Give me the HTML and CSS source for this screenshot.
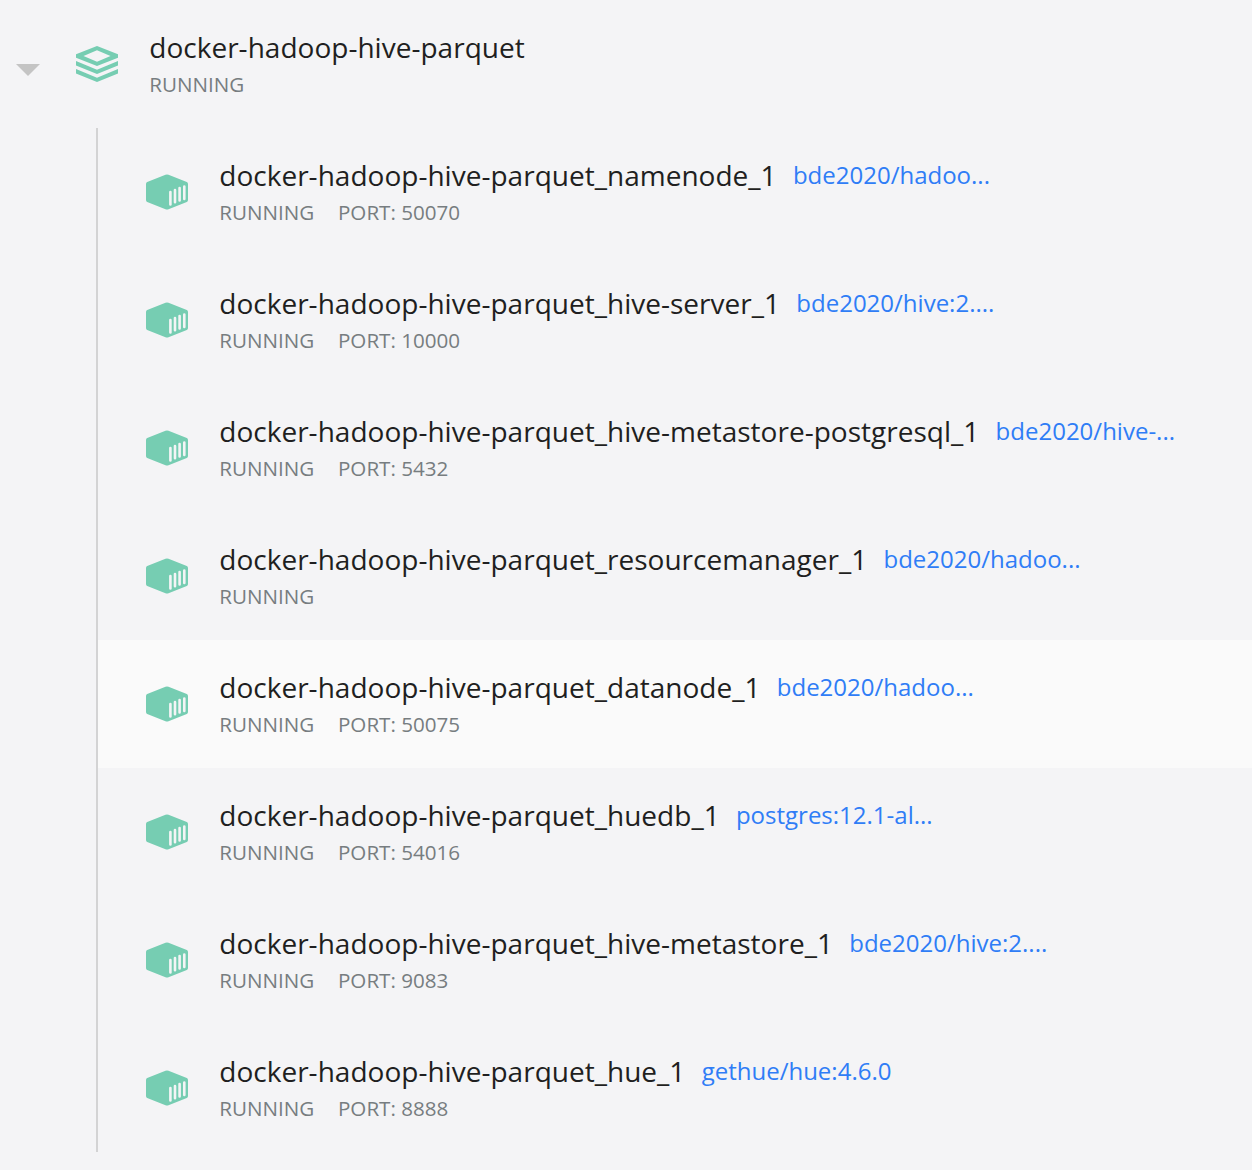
FILE: index.html
```html
<!DOCTYPE html>
<html lang="en">
<head>
<meta charset="utf-8">
<title>Containers</title>
<link rel="stylesheet" href="styles.css">
</head>
<body>
<svg width="0" height="0" class="defs">
  <symbol id="box" viewBox="0 0 42 36"><path fill="#76cdb2" d="M19.500 .8Q21 0 22.500 .8L40.800 8Q42 8.500 42 10V26Q42 27.500 40.800 28L22.500 35.200Q21 36 19.500 35.200L1.200 28Q0 27.500 0 26V10Q0 8.500 1.200 8Z"/><path class="slats" d="M24.400 18v12.500M29 16v12.200M33.600 14v12.500M38.300 12.500v12.500"/></symbol>
</svg>
<main class="tree">
  <header class="group">
    <svg class="caret" viewBox="0 0 24 12"><path d="M0 0h24L12 12z" fill="#c4c4c4"/></svg>
    <svg class="stack" viewBox="0 0 42 36"><path fill-rule="evenodd" d="M21 0L42 8.300V11.700L21 20L0 11.700V8.300ZM21 4.300L7.500 10L21 15.700L34.500 10ZM0 15.100L21 23.800L42 15.100V19.500L21 28L0 19.500ZM0 23.100L21 31.800L42 23.100V27.500L21 36L0 27.500Z"/></svg>
    <div class="info"><h1 class="name">docker-hadoop-hive-parquet</h1><p class="meta"><span>RUNNING</span></p></div>
  </header>
  <ul class="list">
    <li class="row"><svg class="box"><use href="#box"/></svg><div class="info"><div class="title"><span class="name">docker-hadoop-hive-parquet_namenode_1</span><a class="image">bde2020/hadoo...</a></div><p class="meta"><span>RUNNING</span><span>PORT: 50070</span></p></div></li>
    <li class="row"><svg class="box"><use href="#box"/></svg><div class="info"><div class="title"><span class="name">docker-hadoop-hive-parquet_hive-server_1</span><a class="image">bde2020/hive:2....</a></div><p class="meta"><span>RUNNING</span><span>PORT: 10000</span></p></div></li>
    <li class="row"><svg class="box"><use href="#box"/></svg><div class="info"><div class="title"><span class="name">docker-hadoop-hive-parquet_hive-metastore-postgresql_1</span><a class="image">bde2020/hive-...</a></div><p class="meta"><span>RUNNING</span><span>PORT: 5432</span></p></div></li>
    <li class="row"><svg class="box"><use href="#box"/></svg><div class="info"><div class="title"><span class="name">docker-hadoop-hive-parquet_resourcemanager_1</span><a class="image">bde2020/hadoo...</a></div><p class="meta"><span>RUNNING</span></p></div></li>
    <li class="row active"><svg class="box"><use href="#box"/></svg><div class="info"><div class="title"><span class="name">docker-hadoop-hive-parquet_datanode_1</span><a class="image">bde2020/hadoo...</a></div><p class="meta"><span>RUNNING</span><span>PORT: 50075</span></p></div></li>
    <li class="row"><svg class="box"><use href="#box"/></svg><div class="info"><div class="title"><span class="name">docker-hadoop-hive-parquet_huedb_1</span><a class="image">postgres:12.1-al...</a></div><p class="meta"><span>RUNNING</span><span>PORT: 54016</span></p></div></li>
    <li class="row"><svg class="box"><use href="#box"/></svg><div class="info"><div class="title"><span class="name">docker-hadoop-hive-parquet_hive-metastore_1</span><a class="image">bde2020/hive:2....</a></div><p class="meta"><span>RUNNING</span><span>PORT: 9083</span></p></div></li>
    <li class="row"><svg class="box"><use href="#box"/></svg><div class="info"><div class="title"><span class="name">docker-hadoop-hive-parquet_hue_1</span><a class="image">gethue/hue:4.6.0</a></div><p class="meta"><span>RUNNING</span><span>PORT: 8888</span></p></div></li>
  </ul>
</main>
</body>
</html>
```
FILE: styles.css
```css
* { box-sizing: border-box; margin: 0; padding: 0; }
body { background: #f4f4f6; font-family: "Open Sans", sans-serif; height: 1170px; overflow: hidden; }
.defs { display: block; }
.group { display: flex; align-items: center; height: 128px; padding-left: 16px; }
.caret { width: 24px; height: 12px; margin-top: 12px; }
.stack { width: 42px; height: 36px; margin: 0 31.25px 0 36px; fill: #76cdb2; }
.list { list-style: none; margin-left: 96px; border-left: 2px solid #d3d3d4; }
.row { display: flex; align-items: center; height: 128px; padding-left: 48px; }
.active { background: #fafafa; }
.box { width: 42px; height: 36px; margin-right: 31.25px; }
.slats { fill: none; stroke: #f4f4f6; stroke-width: 2.6; stroke-linecap: round; }
.title { display: flex; align-items: flex-start; gap: 16.25px; }
.name { font-size: 28px; font-weight: 400; line-height: 38px; letter-spacing: 0.015px; color: #1f1f21; white-space: nowrap; }
.image { font-size: 24px; line-height: 38px; color: #2f7df6; white-space: nowrap; }
.meta { display: flex; gap: 23.75px; font-size: 20.6px; line-height: 28px; color: #777d80; margin-top: 4px; }
.info { padding-bottom: 2px; }
```
